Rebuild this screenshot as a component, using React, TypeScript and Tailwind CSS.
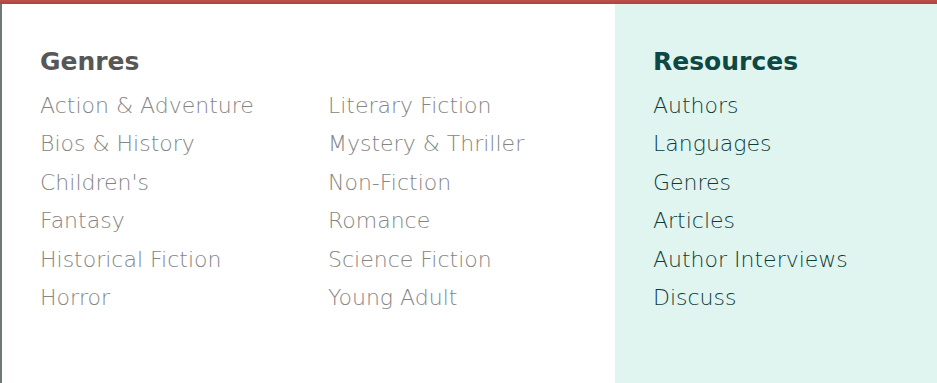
import React from "react";

const genresLeft = [
  "Action & Adventure",
  "Bios & History",
  "Children's",
  "Fantasy",
  "Historical Fiction",
  "Horror",
];

const genresRight = [
  "Literary Fiction",
  "Mystery & Thriller",
  "Non-Fiction",
  "Romance",
  "Science Fiction",
  "Young Adult",
];

const resources = [
  "Authors",
  "Languages",
  "Genres",
  "Articles",
  "Author Interviews",
  "Discuss",
];

const GenreList = ({ items }: { items: string[] }) => {
  return (
    <ul className="flex flex-col">
      {items.map((item) => (
        <li key={item} className="h-[38.4px] leading-[38px]">
          <a href="#" className="text-[22px] font-extralight text-[#858585]">
            {item}
          </a>
        </li>
      ))}
    </ul>
  );
};

export default function App() {
  return (
    <div
      className="flex flex-col w-[937px] h-[383px] bg-white overflow-hidden"
      style={{ fontFamily: "'DejaVu Sans', Lato, sans-serif" }}
    >
      <div className="h-[4px] w-full bg-gradient-to-b from-[#c0504c] to-[#a94442]" />
      <div className="flex flex-1">
        <div className="w-[2px] bg-[#6f7878]" />
        <div className="flex flex-1 flex-col pl-[38px] pt-[38px]">
          <h2 className="text-[25px] font-bold leading-[40px] text-[#575757] mb-[5px]">
            Genres
          </h2>
          <div className="flex">
            <div className="w-[288px]">
              <GenreList items={genresLeft} />
            </div>
            <GenreList items={genresRight} />
          </div>
        </div>
        <div className="flex flex-col w-[322px] bg-[#e0f5f0] pl-[38px] pt-[38px]">
          <h2 className="text-[25px] font-bold leading-[40px] text-[#0e4845] mb-[5px]">
            Resources
          </h2>
          <ul className="flex flex-col">
            {resources.map((item) => (
              <li key={item} className="h-[38.4px] leading-[38px]">
                <a href="#" className="text-[22px] font-extralight text-[#0c3b38]">
                  {item}
                </a>
              </li>
            ))}
          </ul>
        </div>
      </div>
    </div>
  );
}
